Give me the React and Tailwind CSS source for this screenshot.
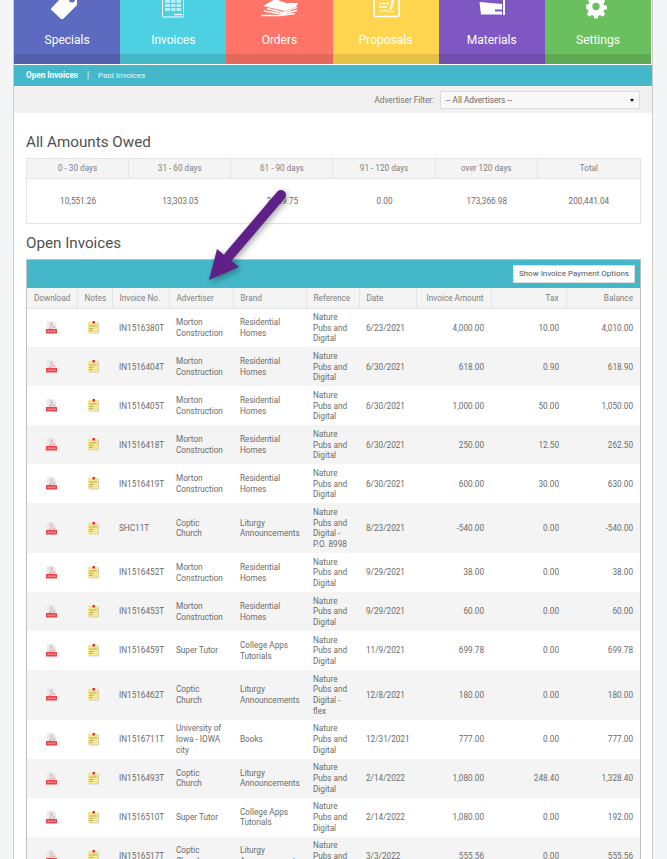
import React from 'react';

const tiles = [
  { name: 'Specials', bg: 'bg-[#5c6bc0]', band: 'bg-[#535fab]', icon: 'tag', left: 14 },
  { name: 'Invoices', bg: 'bg-[#4dd0e1]', band: 'bg-[#45b8c8]', icon: 'invoice', left: 120 },
  { name: 'Orders', bg: 'bg-[#ff7466]', band: 'bg-[#e5685c]', icon: 'papers', left: 226 },
  { name: 'Proposals', bg: 'bg-[#ffd54f]', band: 'bg-[#e5c047]', icon: 'proposal', left: 332 },
  { name: 'Materials', bg: 'bg-[#7e57c2]', band: 'bg-[#714eae]', icon: 'folder', left: 439 },
  { name: 'Settings', bg: 'bg-[#6abf5f]', band: 'bg-[#5fa955]', icon: 'gear', left: 545 },
];

const owed = [
  ['0 - 30 days', '10,551.26'],
  ['31 - 60 days', '13,303.05'],
  ['61 - 90 days', '2,769.75'],
  ['91 - 120 days', '0.00'],
  ['over 120 days', '173,366.98'],
  ['Total', '200,441.04'],
];

const std = 'Nature Pubs and Digital';
const rows = [
  ['IN1516380T', 'Morton Construction', 'Residential Homes', std, '6/23/2021', '4,000.00', '10.00', '4,010.00'],
  ['IN1516404T', 'Morton Construction', 'Residential Homes', std, '6/30/2021', '618.00', '0.90', '618.90'],
  ['IN1516405T', 'Morton Construction', 'Residential Homes', std, '6/30/2021', '1,000.00', '50.00', '1,050.00'],
  ['IN1516418T', 'Morton Construction', 'Residential Homes', std, '6/30/2021', '250.00', '12.50', '262.50'],
  ['IN1516419T', 'Morton Construction', 'Residential Homes', std, '6/30/2021', '600.00', '30.00', '630.00'],
  ['SHC11T', 'Coptic Church', 'Liturgy Announcements', 'Nature Pubs and Digital - P.O. 8998', '8/23/2021', '-540.00', '0.00', '-540.00'],
  ['IN1516452T', 'Morton Construction', 'Residential Homes', std, '9/29/2021', '38.00', '0.00', '38.00'],
  ['IN1516453T', 'Morton Construction', 'Residential Homes', std, '9/29/2021', '60.00', '0.00', '60.00'],
  ['IN1516459T', 'Super Tutor', 'College Apps Tutorials', std, '11/9/2021', '699.78', '0.00', '699.78'],
  ['IN1516462T', 'Coptic Church', 'Liturgy Announcements', 'Nature Pubs and Digital - flex', '12/8/2021', '180.00', '0.00', '180.00'],
  ['IN1516711T', 'University of Iowa - IOWA city', 'Books', std, '12/31/2021', '777.00', '0.00', '777.00'],
  ['IN1516493T', 'Coptic Church', 'Liturgy Announcements', std, '2/14/2022', '1,080.00', '248.40', '1,328.40'],
  ['IN1516510T', 'Super Tutor', 'College Apps Tutorials', std, '2/14/2022', '1,080.00', '0.00', '192.00'],
  ['IN1516517T', 'Coptic Church', 'Liturgy Announcements', std, '3/3/2022', '555.56', '0.00', '555.56'],
];

const headers = [
  ['Download', 'w-[50px] text-center'],
  ['Notes', 'w-[35px] text-center'],
  ['Invoice No.', 'w-[57px] text-left'],
  ['Advertiser', 'w-[64px] text-left'],
  ['Brand', 'w-[73px] text-left'],
  ['Reference', 'w-[53px] text-left'],
  ['Date', 'w-[57px] text-left'],
  ['Invoice Amount', 'w-[75px] text-right'],
  ['Tax', 'w-[75px] text-right'],
  ['Balance', 'w-[74px] text-right'],
];

const gearPath =
  'M10 1h4l.6 3.200 1.900.8 2.700-1.900 2.800 2.800-1.900 2.700.8 1.900 3.100.6v4l-3.100.6-.8 1.900 1.900 2.700-2.800 2.800-2.700-1.900-1.900.8-.6 3.200h-4l-.6-3.200-1.900-.8-2.700 1.900-2.800-2.800 1.900-2.700-.8-1.900L1 14v-4l3.100-.6.8-1.900L3 4.900l2.800-2.800 2.700 1.900 1.900-.8zM12 8a4 4 0 1 0 0 8 4 4 0 0 0 0-8z';

// drawn in page coordinates, the top of the icons is cut off by the tile
function TileIcon({ kind, left }) {
  return (
    <svg width="106" height="33" viewBox={`${left} -13 106 33`} className="shrink-0">
      {kind === 'tag' && (
        <>
          <path d="M51.500 8 L60 -1 H77 V5 L63.500 18.500 Q62 20 60.500 18.500 L51.500 10 Q50.500 9 51.500 8 Z" fill="#fff" />
          <circle cx="72" cy="-0.500" r="3" fill="#5c6bc0" />
        </>
      )}
      {kind === 'invoice' && (
        <g fill="none" stroke="#fff">
          <rect x="162.500" y="-8" width="21" height="25" rx="1.500" />
          <rect x="165" y="0" width="16" height="11" fill="#b8eef5" stroke="none" />
          <path d="M165 3.500H181M165 7.500H181M170.500 0V11M176 0V11" stroke="#4dd0e1" />
          <path d="M174 14.500H182" strokeWidth="1.400" />
        </g>
      )}
      {kind === 'papers' && (
        <g fill="none" stroke="#fff">
          <path d="M263 6 L275 -1 L286 3 L298 3 L296 7 L285 11 Z" fill="#fff" stroke="none" />
          <path d="M267 8.500 L283 12.500 L297 7.500 M264 11 L282 14 L297 10.500 M261 15.500 H280 L295 13.500" strokeWidth="1.300" />
        </g>
      )}
      {kind === 'proposal' && (
        <g fill="none" stroke="#fff">
          <rect x="373" y="-9" width="25" height="25.500" rx="2" strokeWidth="1.600" />
          <path d="M378 3.500H388M378 7H386" strokeWidth="1.600" />
          <path d="M391 -1 L393.500 0 L390.500 10 L388.500 10 Z" fill="#fff" stroke="none" />
          <path d="M378 11 H383 L385 10 L387 11.500 H393" strokeWidth="1" />
        </g>
      )}
      {kind === 'folder' && (
        <>
          <path d="M479.500 2 L502 4 V14.500 H481 Z" fill="#fff" />
          <rect x="503" y="-3" width="2" height="18" fill="#fff" />
          <rect x="495" y="9.500" width="7" height="2" fill="#7e57c2" />
        </>
      )}
      {kind === 'gear' && (
        <g transform="translate(585 -4.500) scale(0.917)">
          <path fillRule="evenodd" d={gearPath} fill="#fff" />
        </g>
      )}
    </svg>
  );
}

function PdfIcon() {
  return (
    <svg width="11" height="13" viewBox="0 0 11 13" className="inline-block align-middle">
      <path d="M1 0H7.500L10 2.500V9H1Z" fill="#e9e9eb" />
      <path d="M3 8 C5 6 5.500 4 5 1.500 C6 4 7 6 9 6.500 C7 6.500 5 7 3 8Z" fill="none" stroke="#e08a90" strokeWidth="0.600" />
      <rect x="0" y="8" width="11" height="4.500" fill="#e8454f" />
      <path d="M1.500 10.200H9.500" stroke="#f8c3c6" strokeWidth="1" strokeDasharray="2 1" />
    </svg>
  );
}

function NoteIcon() {
  return (
    <svg width="11" height="13" viewBox="0 0 11 13" className="inline-block align-middle">
      <path d="M1 1.500H11V12.500H1Z" fill="#d6d2b8" />
      <path d="M0 1H10V11.500H0Z" fill="#f7e78f" />
      <rect x="4.500" y="0" width="2.500" height="2.500" fill="#d8323a" />
      <path d="M1 5H9M1 7.500H5.500M1 9.500H4.500" stroke="#a3975a" strokeWidth="0.700" />
    </svg>
  );
}

export default function App() {
  return (
    <div className="relative h-[859px] overflow-hidden bg-[#f4f5f7] font-['Roboto','Noto_Sans',sans-serif] text-[8.2px] text-[#6b6b6b]">
      <div className="ml-[13px] h-full w-[640px] border-x border-[#cccccc] bg-white">
        {/* top tiles */}
        <div className="flex h-[64px] w-[637px]">
          {tiles.map((t) => (
            <div key={t.name} className={`flex flex-1 flex-col items-center justify-end overflow-hidden ${t.bg}`}>
              <TileIcon kind={t.icon} left={t.left} />
              <div className="mt-[12px] mb-[5px] text-[12px] leading-[17px] text-white">{t.name}</div>
              <div className={`h-[10px] w-full shrink-0 ${t.band}`} />
            </div>
          ))}
        </div>

        {/* sub menu */}
        <div className="mt-px flex h-[21px] items-center bg-[#44b8c8] pl-[12px] text-[8.200px] text-white">
          <span className="font-bold">Open Invoices</span>
          <span className="mx-[9px]">|</span>
          <span className="text-[8px] text-[#e4f6f8]">Paid Invoices</span>
        </div>

        {/* filter */}
        <div className="mt-px flex h-[26px] items-center justify-end bg-[#f0f0f0] pr-[12px]">
          <span className="mr-[6px] text-[#757575]">Advertiser Filter:</span>
          <div className="flex h-[18px] w-[200px] items-center justify-between border border-[#dddddd] bg-[#f8f8f8] px-[5px] text-[#666666]">
            <span>-- All Advertisers --</span>
            <span className="h-0 w-0 border-x-[2.500px] border-t-[3px] border-x-transparent border-t-black" />
          </div>
        </div>

        <div className="px-[12px]">
          <h2 className="mt-[18px] text-[15.200px] leading-[22px] text-[#505050]">All Amounts Owed</h2>

          <div className="mt-[5px] w-[615px] border border-[#e4e4e4]">
            <div className="grid h-[20px] grid-cols-6 border-b border-[#e4e4e4] bg-[#f4f4f4]">
              {owed.map(([label], i) => (
                <div key={label} className={`flex items-center justify-center text-[#808080] ${i < 5 ? 'border-r border-[#e4e4e4]' : ''}`}>
                  {label}
                </div>
              ))}
            </div>
            <div className="grid h-[44px] grid-cols-6">
              {owed.map(([label, value]) => (
                <div key={label} className="flex items-center justify-center">
                  {value}
                </div>
              ))}
            </div>
          </div>

          <h2 className="mt-[8px] text-[15.200px] leading-[22px] text-[#505050]">Open Invoices</h2>

          <div className="mt-[5px] w-[615px] border-x border-t border-[#bfbfbf]">
            <div className="flex h-[28px] items-center justify-end bg-[#44b8c8] pr-[5px]">
              <div className="flex h-[18px] items-center border border-[#dddddd] bg-white px-[5px] text-[8px] text-[#555555]">
                Show Invoice Payment Options
              </div>
            </div>
            <table className="w-full table-fixed border-collapse">
              <thead>
                <tr className="h-[20px] border-b border-[#e4e4e4] bg-[#f4f4f4] text-[#808080]">
                  {headers.map(([label, cls], i) => (
                    <th key={label} className={`px-[7px] font-normal whitespace-nowrap ${cls} ${i < 9 ? 'border-r border-[#e4e4e4]' : ''}`}>
                      {label}
                    </th>
                  ))}
                </tr>
              </thead>
              <tbody className="leading-[10.700px]">
                {rows.map((r, i) => (
                  <tr key={r[0]} className={i % 2 === 1 ? 'bg-[#f4f4f4]' : 'bg-white'}>
                    <td className="py-[3.450px] pr-[1px] text-center"><PdfIcon /></td>
                    <td className="py-[3.450px] pr-[2px] text-center"><NoteIcon /></td>
                    <td className="py-[3.450px] pl-[7px] whitespace-nowrap">{r[0]}</td>
                    <td className="py-[3.450px] pr-[8px] pl-[7px]">{r[1]}</td>
                    <td className="py-[3.450px] pr-[2px] pl-[7px]">{r[2]}</td>
                    <td className="py-[3.450px] pr-[8px] pl-[7px]">{r[3]}</td>
                    <td className="py-[3.450px] pl-[7px] whitespace-nowrap">{r[4]}</td>
                    <td className="py-[3.450px] pr-[7px] text-right">{r[5]}</td>
                    <td className="py-[3.450px] pr-[7px] text-right">{r[6]}</td>
                    <td className="py-[3.450px] pr-[7px] text-right">{r[7]}</td>
                  </tr>
                ))}
              </tbody>
            </table>
          </div>
        </div>
      </div>

      {/* annotation arrow over the page */}
      <svg width="90" height="100" viewBox="0 0 90 100" className="absolute top-[188px] left-[203px] drop-shadow-[2px_2px_3px_rgba(0,0,0,0.35)]">
        <path d="M78 7 L26 68" stroke="#5f2187" strokeWidth="10" strokeLinecap="round" fill="none" />
        <path d="M6 92 L14 61 L36 79 Z" fill="#5f2187" />
      </svg>
    </div>
  );
}
